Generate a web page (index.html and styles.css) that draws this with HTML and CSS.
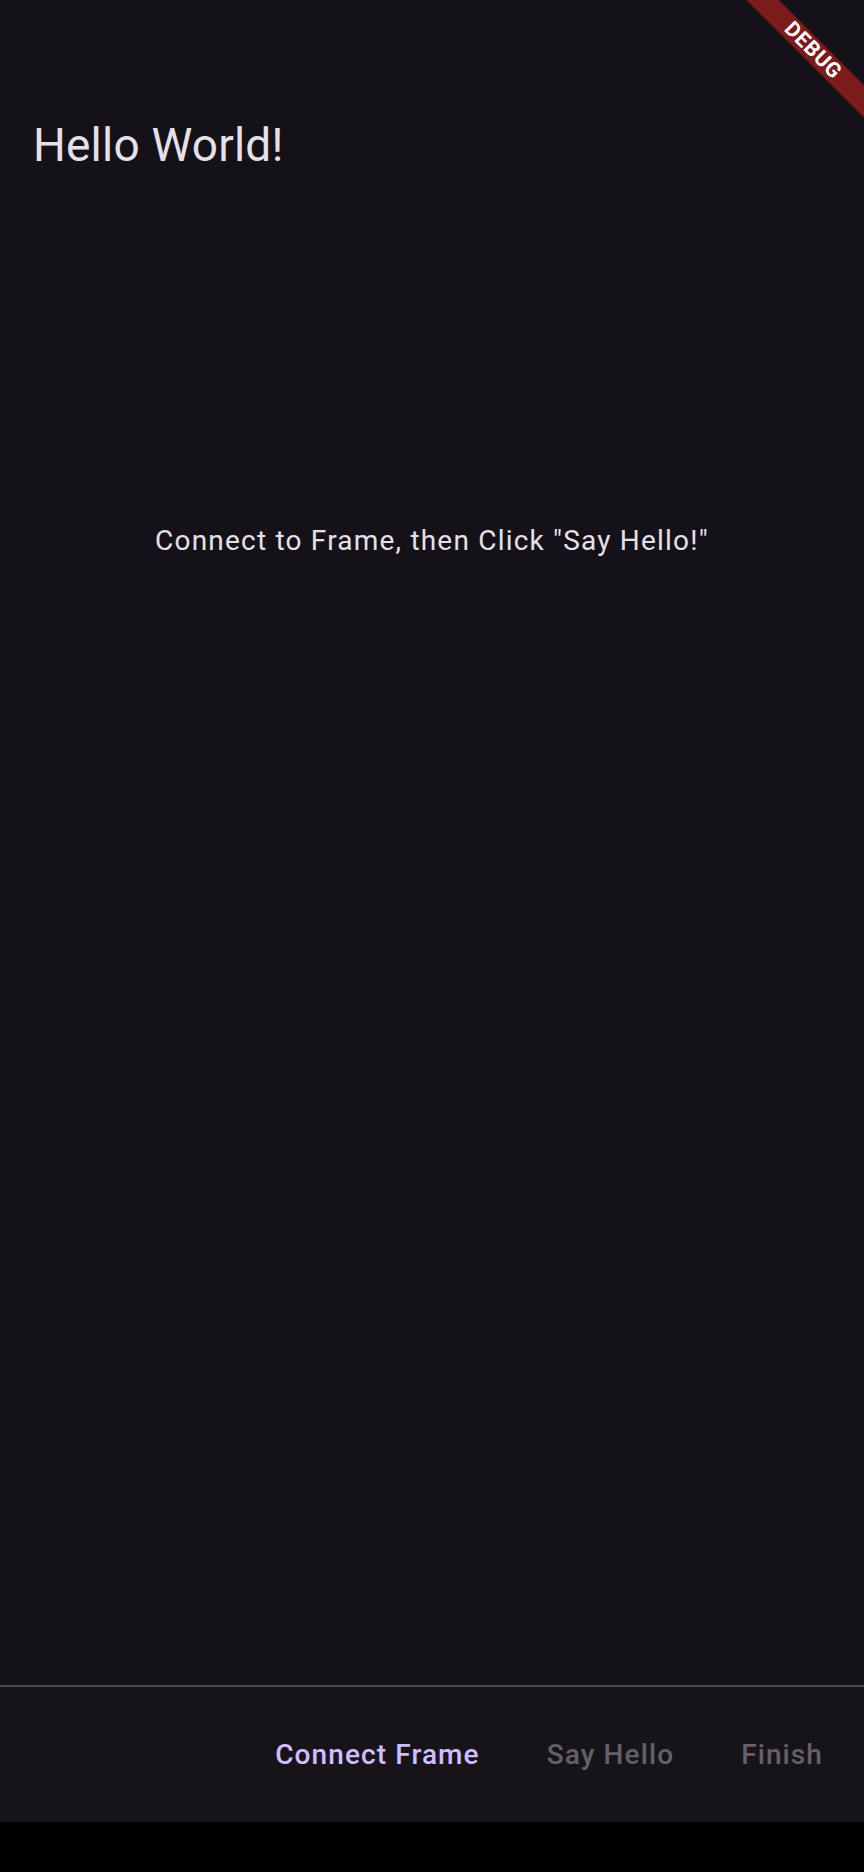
FILE: index.html
```html
<!DOCTYPE html>
<html lang="en">
<head>
<meta charset="utf-8">
<title>Hello World!</title>
<link rel="stylesheet" href="styles.css">
</head>
<body>
<div class="screen">
  <div class="app">
    <header class="appbar">
      <h1 class="title">Hello World!</h1>
    </header>
    <main class="content">
      <p class="message">Connect to Frame, then Click "Say Hello!"</p>
    </main>
    <footer class="bottombar">
      <button class="btn btn-enabled">Connect Frame</button>
      <button class="btn btn-disabled" disabled>Say Hello</button>
      <button class="btn btn-disabled" disabled>Finish</button>
    </footer>
  </div>
  <div class="navstrip"></div>
  <div class="banner"><span>DEBUG</span></div>
</div>
</body>
</html>
```
FILE: styles.css
```css
html, body {
  margin: 0;
  padding: 0;
  background: #000;
}
body {
  font-family: Roboto, "Noto Sans", "Liberation Sans", sans-serif;
  width: 864px;
  height: 1872px;
  overflow: hidden;
}
.screen {
  position: relative;
  width: 864px;
  height: 1872px;
  overflow: hidden;
}
.app {
  height: 1822px;
  display: flex;
  flex-direction: column;
  background: #141218;
}
.appbar {
  padding: 117px 32px 0 33px;
}
.title {
  margin: 0;
  font-size: 46px;
  line-height: 56px;
  font-weight: 400;
  letter-spacing: 0.2px;
  color: #e6e0e9;
}
.content {
  flex: 1;
  padding-top: 348px;
}
.message {
  margin: 0;
  text-align: center;
  font-size: 28px;
  line-height: 40px;
  letter-spacing: 1.2px;
  color: #e6e0e9;
}
.bottombar {
  height: 135px;
  border-top: 2px solid #4a464f;
  background: #161419;
  display: flex;
  justify-content: flex-end;
  align-items: center;
  padding-right: 17px;
  gap: 19px;
}
.btn {
  font-family: inherit;
  background: none;
  border: none;
  padding: 0 24px;
  height: 80px;
  font-size: 28px;
  font-weight: 500;
  letter-spacing: 1.1px;
  cursor: pointer;
}
.btn-enabled {
  color: #d0bcff;
}
.btn-disabled {
  color: #646067;
}
.navstrip {
  height: 50px;
  background: #000;
}
.banner {
  position: absolute;
  left: 663px;
  top: 39px;
  width: 300px;
  height: 23px;
  background: #7a1b1c;
  transform: rotate(45deg);
  display: flex;
  align-items: center;
  justify-content: center;
}
.banner span {
  color: #fff;
  font-size: 21px;
  font-weight: 700;
  line-height: 23px;
  letter-spacing: 0.8px;
}
```
